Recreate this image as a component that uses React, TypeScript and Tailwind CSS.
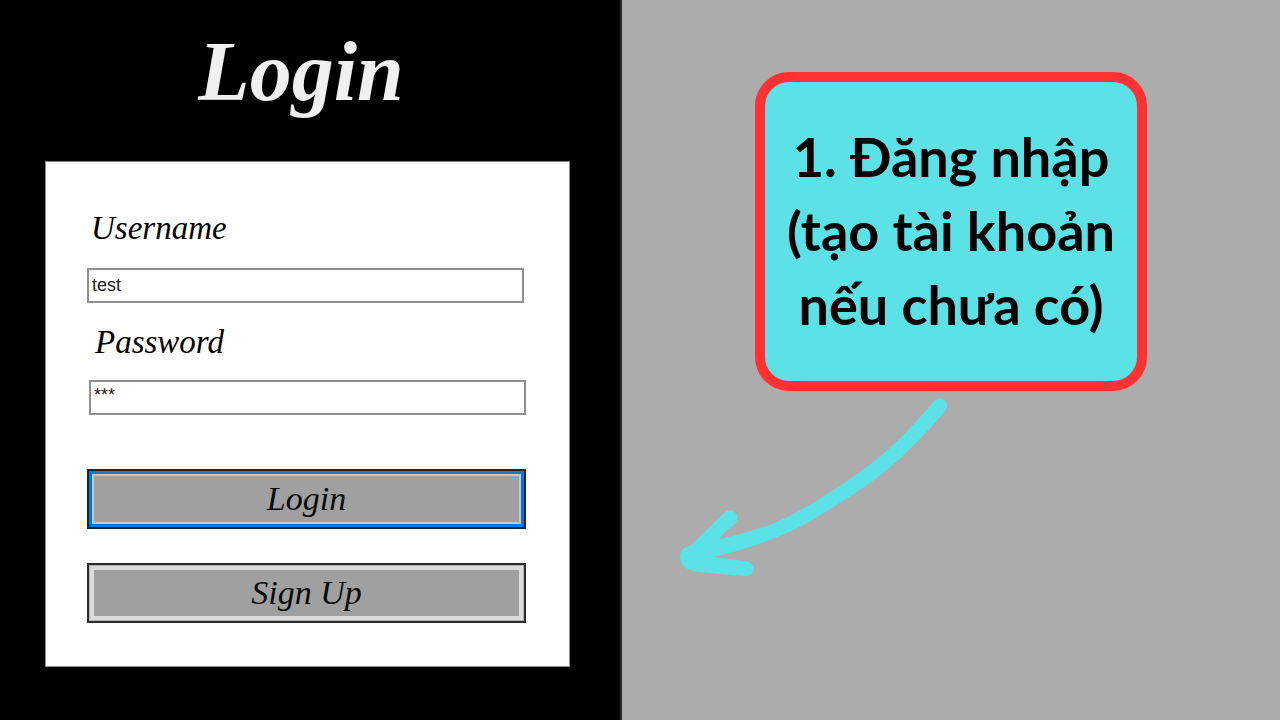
import { useState } from "react";

const script = "font-['Monotype_Corsiva','Liberation_Serif',serif] italic";
const label = `${script} block text-[33px] leading-10 text-black`;
const field =
  "block h-[35px] border-2 border-[#8f8f8f] bg-white px-[3px] font-['Liberation_Sans',sans-serif] text-lg text-[#1a1a1a] outline-none";
const button = `${script} block h-[60px] w-full border-2 bg-[#a0a0a0] text-[34px] leading-10 text-[#0a0a0a]`;

function LoginForm() {
  const [username, setUsername] = useState("test");
  const [password, setPassword] = useState("***");

  return (
    <form
      className="mt-[29px] mr-[50px] ml-[45px] flex flex-col border border-[#8c8c8c] bg-white pr-[43px] pb-[43px] pl-[41px]"
      onSubmit={(e) => e.preventDefault()}
    >
      <label htmlFor="username" className={`${label} mt-[46px] pl-1`}>
        Username
      </label>
      <input
        id="username"
        className={`${field} mt-5 mr-[2px]`}
        value={username}
        onChange={(e) => setUsername(e.target.value)}
      />
      <label htmlFor="password" className={`${label} mt-[19px] pl-2`}>
        Password
      </label>
      <input
        id="password"
        autoComplete="off"
        className={`${field} mt-[18px] ml-[2px] pb-1`}
        value={password}
        onChange={(e) => setPassword(e.target.value)}
      />
      <button
        type="submit"
        className={`${button} mt-[54px] border-[#10243a] shadow-[inset_0_0_0_3px_#0078d7,inset_0_0_0_5px_#c4c8cc]`}
      >
        Login
      </button>
      <button
        type="button"
        className={`${button} mt-[34px] border-[#2c2c2c] shadow-[inset_0_0_0_1px_#b4b4b4,inset_0_0_0_5px_#dcdcdc]`}
      >
        Sign Up
      </button>
    </form>
  );
}

function CurvedArrow() {
  return (
    <svg
      viewBox="660 385 310 210"
      className="-mt-[6px] h-[210px] w-[310px]"
      fill="#5ce1e6"
      aria-hidden="true"
    >
      <path d="M935 400C939 397 944 398 946 402Q949 406 945 411Q933 426 907 452Q888 470 867 485Q848 498 827 511Q807 524 787 533Q770 540 753 546Q735 552 714 557L745 561C751 562 754 565 754 569C753 574 749 577 743 576L698 572C687 570 680 566 680 557C680 550 684 547 690 546L724 513C728 509 734 509 737 515C739 521 734 525 730 528C726 531 722 535 719 539Q740 535 760 528Q777 523 793 514Q811 505 827 494Q844 484 860 472Q877 460 893 445Q914 425 935 400Z" />
    </svg>
  );
}

export default function App() {
  return (
    <main className="flex min-h-screen bg-[#acacac]">
      <section className="w-[48.6%] border-r-2 border-[#2b2b2b] bg-black">
        <h1 className={`${script} pt-5 pr-[18px] pb-2 text-center text-[84px] leading-[104px] font-bold text-[#f0f0f0]`}>
          Login
        </h1>
        <LoginForm />
      </section>
      <section className="flex-1 pt-[72px] pl-[38px]">
        <div className="ml-[95px] flex h-[319px] w-[392px] items-center justify-center rounded-[34px] border-10 border-[#ff3131] bg-[#5ce1e6]">
          <p className="pb-[2px] text-center font-['Lato','Noto_Sans',sans-serif] text-[54px] leading-[74px] font-bold whitespace-nowrap text-black">
            1. Đăng nhập
            <br />
            (tạo tài khoản
            <br />
            nếu chưa có)
          </p>
        </div>
        <CurvedArrow />
      </section>
    </main>
  );
}
